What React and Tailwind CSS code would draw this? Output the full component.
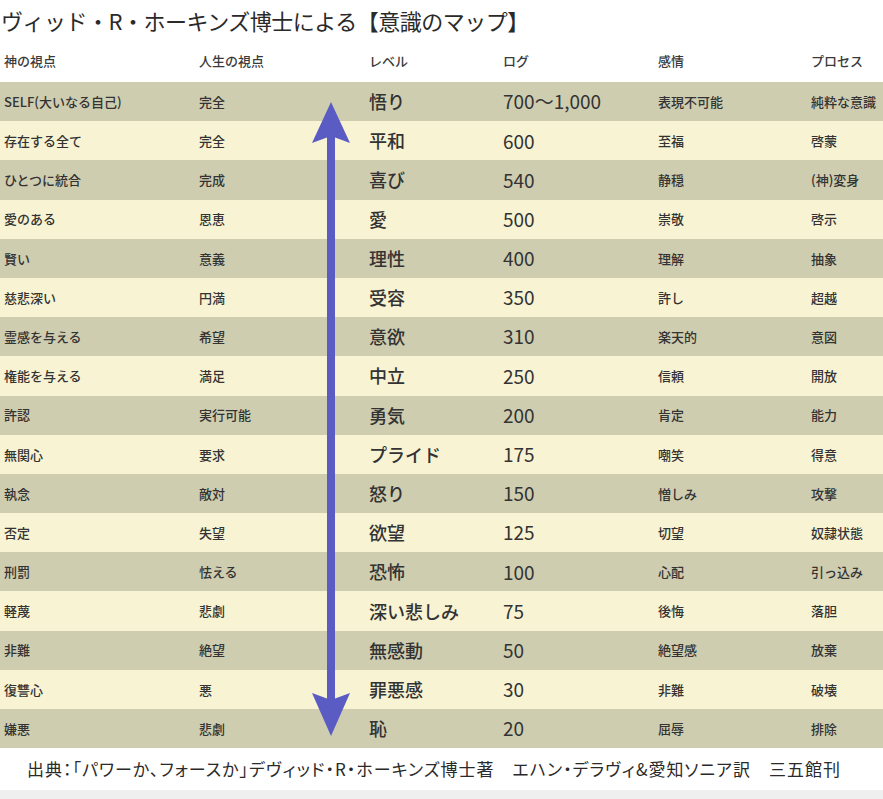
import React from 'react';

const rows = [
  ['SELF(大いなる自己)', '完全', '悟り', '700〜1,000', '表現不可能', '純粋な意識'],
  ['存在する全て', '完全', '平和', '600', '至福', '啓蒙'],
  ['ひとつに統合', '完成', '喜び', '540', '静穏', '(神)変身'],
  ['愛のある', '恩恵', '愛', '500', '崇敬', '啓示'],
  ['賢い', '意義', '理性', '400', '理解', '抽象'],
  ['慈悲深い', '円満', '受容', '350', '許し', '超越'],
  ['霊感を与える', '希望', '意欲', '310', '楽天的', '意図'],
  ['権能を与える', '満足', '中立', '250', '信頼', '開放'],
  ['許認', '実行可能', '勇気', '200', '肯定', '能力'],
  ['無関心', '要求', 'プライド', '175', '嘲笑', '得意'],
  ['執念', '敵対', '怒り', '150', '憎しみ', '攻撃'],
  ['否定', '失望', '欲望', '125', '切望', '奴隷状態'],
  ['刑罰', '怯える', '恐怖', '100', '心配', '引っ込み'],
  ['軽蔑', '悲劇', '深い悲しみ', '75', '後悔', '落胆'],
  ['非難', '絶望', '無感動', '50', '絶望感', '放棄'],
  ['復讐心', '悪', '罪悪感', '30', '非難', '破壊'],
  ['嫌悪', '悲劇', '恥', '20', '屈辱', '排除'],
];

const headers = ['神の視点', '人生の視点', 'レベル', 'ログ', '感情', 'プロセス'];

const cols = 'grid grid-cols-[199px_170px_134px_155px_153px_72px]';

// 縦の矢印（表の上に重ねる）
function Arrow() {
  return (
    <svg className="absolute left-[310px] top-[100px]" width="42" height="638" viewBox="0 0 42 638">
      <rect x="17" y="30" width="8" height="578" fill="#5a5cc4" />
      <path d="M21 2 L40 43 L21 36 L2 43 Z" fill="#5a5cc4" />
      <path d="M21 636 L40 593 L21 600 L2 593 Z" fill="#5a5cc4" />
    </svg>
  );
}

export default function App() {
  return (
    <div className="relative w-[883px] h-[799px] overflow-hidden bg-white text-[#333] font-['Noto_Sans_CJK_JP','Noto_Sans',sans-serif] whitespace-nowrap">
      <div className="h-[40px] flex items-center pl-[1px] text-[22px] text-[#2a2a2a] tracking-[-0.5px]">
        ヴィッド・R・ホーキンズ博士による【意識のマップ】
      </div>

      <div className={`${cols} h-[42px] items-center text-[13px] font-medium text-[#3a3a3a]`}>
        {headers.map((h, i) => (
          <div key={i} className={i === 0 ? 'pl-[4px]' : ''}>{h}</div>
        ))}
      </div>

      <div>
        {rows.map((r, i) => (
          <div
            key={i}
            className={`${cols} h-[39.2px] items-center ${i % 2 === 0 ? 'bg-[#cfcdb0]' : 'bg-[#f8f3d3]'}`}
          >
            <div className="pl-[4px] text-[13px] font-medium">{r[0]}</div>
            <div className="text-[13px] font-medium">{r[1]}</div>
            <div className="text-[18px] font-medium">{r[2]}</div>
            <div className="text-[19px]">{r[3]}</div>
            <div className="text-[13px] font-medium">{r[4]}</div>
            <div className="text-[13px] font-medium">{r[5]}</div>
          </div>
        ))}
      </div>

      <div className="h-[42px] flex items-center pl-[27px] text-[17px] tracking-[1px] text-[#2a2a2a] [font-feature-settings:'palt']">
        出典：「パワーか、フォースか」デヴィッド・R・ホーキンズ博士著　エハン・デラヴィ&amp;愛知ソニア訳　三五館刊
      </div>
      <div className="h-[9px] bg-[#efefef]" />

      <Arrow />
    </div>
  );
}
